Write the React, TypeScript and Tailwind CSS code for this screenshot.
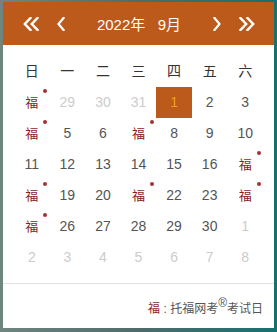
import React from "react";

type Cell = { t: string; fu?: boolean; dim?: boolean; sel?: boolean };

const F: Cell = { t: "", fu: true };
const n = (t: number): Cell => ({ t: String(t) });
const d = (t: number): Cell => ({ t: String(t), dim: true });

const rows: Cell[][] = [
  [F, d(29), d(30), d(31), { t: "1", sel: true }, n(2), n(3)],
  [F, n(5), n(6), F, n(8), n(9), n(10)],
  [n(11), n(12), n(13), n(14), n(15), n(16), F],
  [F, n(19), n(20), F, n(22), n(23), F],
  [F, n(26), n(27), n(28), n(29), n(30), d(1)],
  [d(2), d(3), d(4), d(5), d(6), d(7), d(8)],
];

const weekdays = ["日", "一", "二", "三", "四", "五", "六"];

function DoubleLeft() {
  return (
    <svg width="16" height="14" viewBox="0 0 16 14" fill="none" stroke="white" strokeWidth="2.4" strokeLinecap="square">
      <polyline points="7.5,1 1.8,7 7.5,13" />
      <polyline points="14.5,1 8.8,7 14.5,13" />
    </svg>
  );
}
function DoubleRight() {
  return (
    <svg width="16" height="14" viewBox="0 0 16 14" fill="none" stroke="white" strokeWidth="2.4" strokeLinecap="square">
      <polyline points="1.5,1 7.2,7 1.5,13" />
      <polyline points="8.5,1 14.2,7 8.5,13" />
    </svg>
  );
}
function Left() {
  return (
    <svg width="8" height="14" viewBox="0 0 8 14" fill="none" stroke="white" strokeWidth="2.2" strokeLinecap="square">
      <polyline points="6.5,1 1.5,7 6.5,13" />
    </svg>
  );
}
function Right() {
  return (
    <svg width="8" height="14" viewBox="0 0 8 14" fill="none" stroke="white" strokeWidth="2.2" strokeLinecap="square">
      <polyline points="1.5,1 6.5,7 1.5,13" />
    </svg>
  );
}

export default function App() {
  return (
    <div
      className="w-[277px] h-[332px] overflow-hidden pt-[2px] pl-[3px] bg-[linear-gradient(90deg,#6f8580_0%,#4f6b6b_50%,#177070_100%)]"
      style={{ fontFamily: '"Liberation Sans", "Noto Sans CJK SC", sans-serif' }}
    >
      <div className="w-[271px] h-[326px] bg-white flex flex-col">
        <div className="h-[43px] bg-[#bb5a1a] flex items-center text-white pl-[20px] pr-[19px]">
          <DoubleLeft />
          <div className="ml-[18px]">
            <Left />
          </div>
          <div className="flex-1 text-center text-[15px] leading-none pt-[1px]">2022年&nbsp;&nbsp;&nbsp;9月</div>
          <div className="mr-[18px]">
            <Right />
          </div>
          <DoubleRight />
        </div>
        <div className="px-[11px] pt-[11px]">
          <div className="grid grid-cols-7 h-[31px] items-center text-center text-[14px] text-[#333]">
            {weekdays.map((w) => (
              <div key={w}>{w}</div>
            ))}
          </div>
          {rows.map((r, i) => (
            <div key={i} className="grid grid-cols-7 h-[31px] text-center text-[14px]">
              {r.map((c, j) => (
                <div
                  key={j}
                  className={
                    "flex items-center justify-center " +
                    (c.sel ? "bg-[#bb5a1a] text-[#f0a020]" : c.dim ? "text-[#cccccc]" : "text-[#555]")
                  }
                >
                  {c.fu ? (
                    <span className="relative text-[#8a1c1c] text-[13px]">
                      福
                      <span className="absolute right-[-9px] top-[-4px] w-[4px] h-[4px] rounded-full bg-[#a33236]" />
                    </span>
                  ) : (
                    c.t
                  )}
                </div>
              ))}
            </div>
          ))}
        </div>
        <div className="mt-[10px] border-t border-[#e0e0e0] flex-1 flex items-start justify-end pr-[11px] pt-[17px] text-[12px] leading-[16px] text-[#555]">
          <span className="text-[#8a1c1c]">福</span>
          <span>&nbsp;:&nbsp;托福网考</span>
          <span className="relative top-[-6px] text-[12px]">®</span>
          <span>考试日</span>
        </div>
      </div>
    </div>
  );
}
